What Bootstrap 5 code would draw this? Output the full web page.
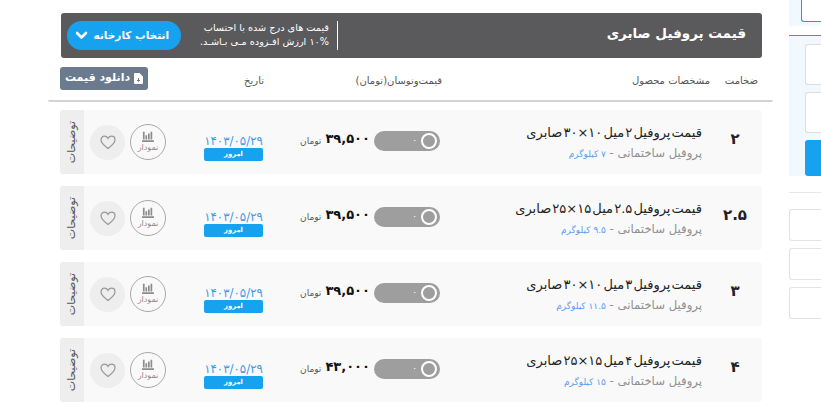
<!DOCTYPE html>
<html lang="fa">
<head>
  <meta charset="UTF-8">
  <title>قیمت پروفیل صابری</title>
  <link rel="stylesheet" href="https://cdn.jsdelivr.net/npm/bootstrap@5.3.0/dist/css/bootstrap.min.css">
  <style>
    body { font-family: "DejaVu Sans", "Noto Sans", sans-serif; background: #fff; overflow: hidden; height: 420px; }
    .page-wrap { padding-left: 48px; width: 821px; height: 420px; overflow: hidden; }
    .main-col { width: 725px; flex: none; padding-top: 13px; }
    .side-col { width: 32px; flex: none; margin-left: 16px; }

    .price-head { height: 45px; margin: 0 11px 0 13px; background: #5a5a5c; border-radius: 3px; padding: 0 16px 0 6px; color: #fff; }
    .price-head h1 { font-size: 13.5px; font-weight: 700; margin: 0 0 4px; }
    .head-note { margin-right: auto; width: 139px; height: 29px; border-right: 1px solid #fff; padding-right: 8px; font-size: 9.7px; line-height: 13.5px; white-space: nowrap; }
    .factory-btn { width: 114px; height: 29px; margin-right: 18px; background: #17a2ef; border-radius: 15px; font-size: 10.5px; font-weight: 700; color: #fff; padding: 0 12px 0 8px; }

    .table-head { height: 44px; margin-bottom: 8px; border-bottom: 2px solid #d4d4d4; border-radius: 0 0 2px 2px; font-size: 10px; color: #555; padding-top: 9px; }
    .table-head > div { white-space: nowrap; }
    .th-cell { margin-top: 6px; }
    .th-thick { width: 63px; padding-right: 15px; }
    .th-spec { width: 268px; }
    .th-price { width: 178px; }
    .th-date { width: 30px; }
    .dl-btn { width: 88px; height: 23px; margin-left: 12px; background: #6c7a8e; border-radius: 3px; color: #fff; font-size: 11px; font-weight: 700; }

    .price-row { height: 64px; margin: 0 11px 12px 12px; background: #f9f9f9; border-radius: 3px; overflow: hidden; }
    .cell-num { width: 60px; font-size: 15px; font-weight: 700; color: #222; text-align: center; padding: 0 0 5px 6px; }
    .cell-spec { width: 262px; }
    .spec-title { font-size: 13px; word-spacing: -3px; color: #222; line-height: 18px; white-space: nowrap; margin-bottom: 4px; }
    .spec-sub { font-size: 11.7px; color: #8f8f8f; line-height: 14px; white-space: nowrap; }
    .spec-sub span { color: #5c9df0; font-size: 9px; }
    .toggle-pill { width: 66px; height: 20px; margin: 0 0 2px 4px; background: #9e9e9e; border-radius: 10px; padding: 0 3px; font-size: 9px; color: #fff; }
    .toggle-knob { width: 16px; height: 16px; border: 2px solid #fff; border-radius: 50%; background: #9e9e9e; }
    .cell-price { width: 73px; }
    .price-num { font-size: 13px; font-weight: 700; color: #111; white-space: nowrap; margin-bottom: 6px; }
    .price-unit { font-size: 9px; color: #555; white-space: nowrap; }
    .cell-date { width: 59px; margin: 11px 34px 0 0; }
    .date-num { font-size: 11.8px; color: #3d9be9; line-height: 13px; text-align: center; white-space: nowrap; }
    .date-badge { height: 13px; background: #17a2ef; border-radius: 2px; color: #fff; font-size: 6.8px; font-weight: 700; line-height: 12px; text-align: center; }
    .chart-btn { width: 36px; height: 36px; margin-right: 38px; border: 1px solid #a8a8a8; border-radius: 50%; color: #8c8c8c; font-size: 8px; line-height: 11px; }
    .heart-btn { width: 35px; height: 35px; margin-right: 5px; background: #eee; border-radius: 50%; }
    .notes-tab { width: 24px; height: 64px; margin-right: 6px; background: #eee; font-size: 11px; color: #555; }
    .notes-tab span { writing-mode: vertical-rl; transform: rotate(180deg); white-space: nowrap; }

    .side-top { height: 26px; background: #f2f9fe; padding-left: 12px; }
    .side-top div { height: 22px; background: #fff; border: 1px solid #17a2ef; border-top: 0; border-right: 0; border-radius: 0 0 0 3px; }
    .side-form { height: 141px; margin-top: 9px; background: #f2f9fe; border-top: 1px solid #17a2ef; padding: 8px 0 0 16px; }
    .side-input { height: 41px; margin-bottom: 7px; background: #fff; border: 1px solid #ddd; border-right: 0; border-radius: 3px 0 0 3px; }
    .side-send { height: 36px; background: #17a2ef; border-radius: 3px 0 0 3px; }
    .side-line { height: 1px; margin: 16px 0; background: #e8e8e8; }
    .side-box { height: 32px; margin-bottom: 7px; background: #fff; border: 1px solid #e2e2e2; border-right: 0; border-radius: 3px 0 0 3px; }
  </style>
</head>
<body>

  <div class="page-wrap d-flex">
    <div class="main-col" dir="rtl">

      <div class="price-head d-flex align-items-center">
        <h1>قیمت پروفیل صابری</h1>
        <div class="head-note">قیمت های درج شده با احتساب<br>۱۰% ارزش افـزوده مـی بـاشـد.</div>
        <div class="factory-btn d-flex align-items-center justify-content-between">
          <span>انتخاب کارخانه</span>
          <svg width="13" height="9" viewBox="0 0 13 9"><path d="M2 2l4.500 4.500L11 2" fill="none" stroke="#fff" stroke-width="2.600" stroke-linecap="round" stroke-linejoin="round"/></svg>
        </div>
      </div>

      <div class="table-head d-flex align-items-start">
        <div class="th-cell th-thick">ضخامت</div>
        <div class="th-cell th-spec">مشخصات محصول</div>
        <div class="th-cell th-price">قیمت‌ونوسان(تومان)</div>
        <div class="th-cell th-date">تاریخ</div>
        <div class="dl-btn d-flex align-items-center justify-content-center gap-1 me-auto">
          <svg width="9" height="11" viewBox="0 0 9 11"><path d="M0 1a1 1 0 0 1 1-1h4.500L9 3.500V10a1 1 0 0 1-1 1H1a1 1 0 0 1-1-1z" fill="#fff"/><path d="M4.500 5v3M3 7l1.500 1.500L6 7" fill="none" stroke="#6c7a8e" stroke-width="1"/></svg>
          <span>دانلود قیمت</span>
        </div>
      </div>

      <div class="price-row d-flex align-items-center">
        <div class="cell-num">۲</div>
        <div class="cell-spec">
          <div class="spec-title">قیمت پروفیل ۲ میل ۱۰×۳۰ صابری</div>
          <div class="spec-sub">پروفیل ساختمانی - <span>۷ کیلوگرم</span></div>
        </div>
        <div class="toggle-pill d-flex align-items-center gap-1" dir="ltr"><span class="ms-auto">۰</span><span class="toggle-knob"></span></div>
        <div class="cell-price d-flex align-items-center gap-1"><span class="price-num">۳۹,۵۰۰</span><span class="price-unit">تومان</span></div>
        <div class="cell-date"><div class="date-num" dir="ltr">۱۴۰۳/۰۵/۲۹</div><div class="date-badge">امروز</div></div>
        <div class="chart-btn d-flex flex-column align-items-center justify-content-center">
          <svg width="14" height="11" viewBox="0 0 15 13"><path d="M2.500 1v9M5.500 5v5M8.500 3v7M11.500 1v9M0.500 12h14" fill="none" stroke="#8c8c8c" stroke-width="2"/></svg>
          <span>نمودار</span>
        </div>
        <div class="heart-btn d-flex align-items-center justify-content-center">
          <svg width="16" height="15" viewBox="0 0 16 15"><path d="M8 13.500C3 9.800 1 7.500 1 4.800 1 2.700 2.600 1.200 4.500 1.200c1.400 0 2.700.8 3.500 2.100.8-1.300 2.100-2.100 3.500-2.100 1.900 0 3.500 1.500 3.500 3.600 0 2.700-2 5-7 8.700z" fill="none" stroke="#9a9a9a" stroke-width="1.300"/></svg>
        </div>
        <div class="notes-tab d-flex align-items-center justify-content-center"><span>توضیحات</span></div>
      </div>

      <div class="price-row d-flex align-items-center">
        <div class="cell-num">۲.۵</div>
        <div class="cell-spec">
          <div class="spec-title">قیمت پروفیل ۲.۵ میل ۱۵×۲۵ صابری</div>
          <div class="spec-sub">پروفیل ساختمانی - <span>۹.۵ کیلوگرم</span></div>
        </div>
        <div class="toggle-pill d-flex align-items-center gap-1" dir="ltr"><span class="ms-auto">۰</span><span class="toggle-knob"></span></div>
        <div class="cell-price d-flex align-items-center gap-1"><span class="price-num">۳۹,۵۰۰</span><span class="price-unit">تومان</span></div>
        <div class="cell-date"><div class="date-num" dir="ltr">۱۴۰۳/۰۵/۲۹</div><div class="date-badge">امروز</div></div>
        <div class="chart-btn d-flex flex-column align-items-center justify-content-center">
          <svg width="14" height="11" viewBox="0 0 15 13"><path d="M2.500 1v9M5.500 5v5M8.500 3v7M11.500 1v9M0.500 12h14" fill="none" stroke="#8c8c8c" stroke-width="2"/></svg>
          <span>نمودار</span>
        </div>
        <div class="heart-btn d-flex align-items-center justify-content-center">
          <svg width="16" height="15" viewBox="0 0 16 15"><path d="M8 13.500C3 9.800 1 7.500 1 4.800 1 2.700 2.600 1.200 4.500 1.200c1.400 0 2.700.8 3.500 2.100.8-1.300 2.100-2.100 3.500-2.100 1.900 0 3.500 1.500 3.500 3.600 0 2.700-2 5-7 8.700z" fill="none" stroke="#9a9a9a" stroke-width="1.300"/></svg>
        </div>
        <div class="notes-tab d-flex align-items-center justify-content-center"><span>توضیحات</span></div>
      </div>

      <div class="price-row d-flex align-items-center">
        <div class="cell-num">۳</div>
        <div class="cell-spec">
          <div class="spec-title">قیمت پروفیل ۳ میل ۱۰×۳۰ صابری</div>
          <div class="spec-sub">پروفیل ساختمانی - <span>۱۱.۵ کیلوگرم</span></div>
        </div>
        <div class="toggle-pill d-flex align-items-center gap-1" dir="ltr"><span class="ms-auto">۰</span><span class="toggle-knob"></span></div>
        <div class="cell-price d-flex align-items-center gap-1"><span class="price-num">۳۹,۵۰۰</span><span class="price-unit">تومان</span></div>
        <div class="cell-date"><div class="date-num" dir="ltr">۱۴۰۳/۰۵/۲۹</div><div class="date-badge">امروز</div></div>
        <div class="chart-btn d-flex flex-column align-items-center justify-content-center">
          <svg width="14" height="11" viewBox="0 0 15 13"><path d="M2.500 1v9M5.500 5v5M8.500 3v7M11.500 1v9M0.500 12h14" fill="none" stroke="#8c8c8c" stroke-width="2"/></svg>
          <span>نمودار</span>
        </div>
        <div class="heart-btn d-flex align-items-center justify-content-center">
          <svg width="16" height="15" viewBox="0 0 16 15"><path d="M8 13.500C3 9.800 1 7.500 1 4.800 1 2.700 2.600 1.200 4.500 1.200c1.400 0 2.700.8 3.500 2.100.8-1.300 2.100-2.100 3.500-2.100 1.900 0 3.500 1.500 3.500 3.600 0 2.700-2 5-7 8.700z" fill="none" stroke="#9a9a9a" stroke-width="1.300"/></svg>
        </div>
        <div class="notes-tab d-flex align-items-center justify-content-center"><span>توضیحات</span></div>
      </div>

      <div class="price-row d-flex align-items-center">
        <div class="cell-num">۴</div>
        <div class="cell-spec">
          <div class="spec-title">قیمت پروفیل ۴ میل ۱۵×۲۵ صابری</div>
          <div class="spec-sub">پروفیل ساختمانی - <span>۱۵ کیلوگرم</span></div>
        </div>
        <div class="toggle-pill d-flex align-items-center gap-1" dir="ltr"><span class="ms-auto">۰</span><span class="toggle-knob"></span></div>
        <div class="cell-price d-flex align-items-center gap-1"><span class="price-num">۴۳,۰۰۰</span><span class="price-unit">تومان</span></div>
        <div class="cell-date"><div class="date-num" dir="ltr">۱۴۰۳/۰۵/۲۹</div><div class="date-badge">امروز</div></div>
        <div class="chart-btn d-flex flex-column align-items-center justify-content-center">
          <svg width="14" height="11" viewBox="0 0 15 13"><path d="M2.500 1v9M5.500 5v5M8.500 3v7M11.500 1v9M0.500 12h14" fill="none" stroke="#8c8c8c" stroke-width="2"/></svg>
          <span>نمودار</span>
        </div>
        <div class="heart-btn d-flex align-items-center justify-content-center">
          <svg width="16" height="15" viewBox="0 0 16 15"><path d="M8 13.500C3 9.800 1 7.500 1 4.800 1 2.700 2.600 1.200 4.500 1.200c1.400 0 2.700.8 3.500 2.100.8-1.300 2.100-2.100 3.500-2.100 1.900 0 3.500 1.500 3.500 3.600 0 2.700-2 5-7 8.700z" fill="none" stroke="#9a9a9a" stroke-width="1.300"/></svg>
        </div>
        <div class="notes-tab d-flex align-items-center justify-content-center"><span>توضیحات</span></div>
      </div>

    </div>

    <div class="side-col">
      <div class="side-top"><div></div></div>
      <div class="side-form">
        <div class="side-input"></div>
        <div class="side-input"></div>
        <div class="side-send"></div>
      </div>
      <div class="side-line"></div>
      <div class="side-box"></div>
      <div class="side-box"></div>
      <div class="side-box"></div>
    </div>
  </div>

  <script src="https://cdn.jsdelivr.net/npm/bootstrap@5.3.0/dist/js/bootstrap.bundle.min.js"></script>
</body>
</html>
